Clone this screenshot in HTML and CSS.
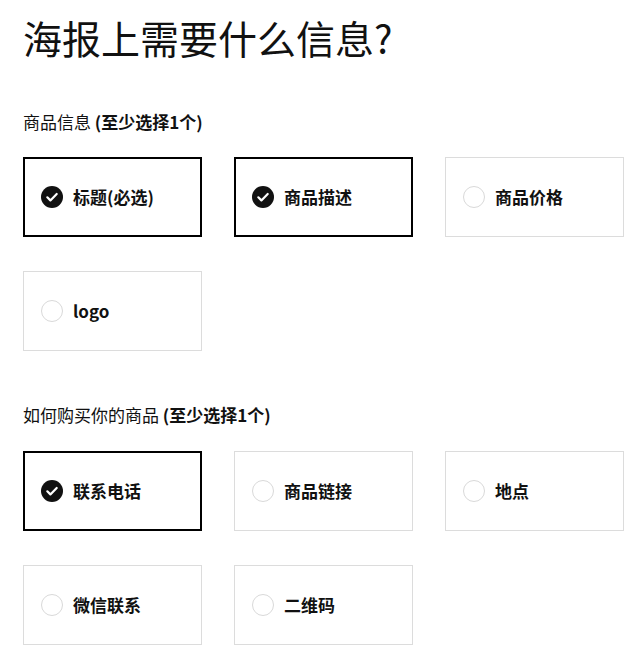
FILE: index.html
```html
<!DOCTYPE html>
<html lang="zh">
<head>
<meta charset="utf-8">
<link rel="stylesheet" href="styles.css">
</head>
<body>
<div class="page">
  <h1 class="title">海报上需要什么信息?</h1>

  <div class="section">
    <div class="label">商品信息 <b>(至少选择1个)</b></div>
    <div class="grid">
      <div class="card selected"><span class="mark"><svg viewBox="0 0 22 22"><circle cx="11" cy="11" r="11" fill="#111"/><path d="M6.3 11.3l3.1 3.1 6.3-6.4" fill="none" stroke="#fff" stroke-width="2.2" stroke-linecap="round" stroke-linejoin="round"/></svg></span><span class="name">标题(必选)</span></div>
      <div class="card selected"><span class="mark"><svg viewBox="0 0 22 22"><circle cx="11" cy="11" r="11" fill="#111"/><path d="M6.3 11.3l3.1 3.1 6.3-6.4" fill="none" stroke="#fff" stroke-width="2.2" stroke-linecap="round" stroke-linejoin="round"/></svg></span><span class="name">商品描述</span></div>
      <div class="card"><span class="mark empty"></span><span class="name">商品价格</span></div>
      <div class="card"><span class="mark empty"></span><span class="name">logo</span></div>
    </div>
  </div>

  <div class="section second">
    <div class="label">如何购买你的商品 <b>(至少选择1个)</b></div>
    <div class="grid">
      <div class="card selected"><span class="mark"><svg viewBox="0 0 22 22"><circle cx="11" cy="11" r="11" fill="#111"/><path d="M6.3 11.3l3.1 3.1 6.3-6.4" fill="none" stroke="#fff" stroke-width="2.2" stroke-linecap="round" stroke-linejoin="round"/></svg></span><span class="name">联系电话</span></div>
      <div class="card"><span class="mark empty"></span><span class="name">商品链接</span></div>
      <div class="card"><span class="mark empty"></span><span class="name">地点</span></div>
      <div class="card"><span class="mark empty"></span><span class="name">微信联系</span></div>
      <div class="card"><span class="mark empty"></span><span class="name">二维码</span></div>
    </div>
  </div>
</div>
</body>
</html>
```
FILE: styles.css
```css
html, body {
  margin: 0;
  padding: 0;
  background: #fff;
}
body {
  font-family: "Noto Sans CJK SC", "Noto Sans", sans-serif;
  color: #111;
}
.page {
  padding: 14px 0 0 23px;
}
.title {
  margin: 0;
  font-size: 39px;
  line-height: 46px;
  font-weight: 400;
  color: #111;
}
.section {
  margin-top: 52px;
}
.section.second {
  margin-top: 54px;
}
.label {
  font-size: 17px;
  line-height: 20px;
  font-weight: 400;
}
.label b {
  font-weight: 700;
}
.grid {
  margin-top: 25px;
  display: grid;
  grid-template-columns: repeat(3, 179px);
  column-gap: 32px;
  row-gap: 34px;
}
.second .grid {
  margin-top: 26px;
}
.card {
  box-sizing: border-box;
  height: 80px;
  border: 1px solid #dcdcdc;
  display: flex;
  align-items: center;
  padding-left: 17px;
  gap: 10px;
}
.card.selected {
  border-color: #000;
  box-shadow: inset 0 0 0 1px #000;
}
.mark {
  width: 22px;
  height: 22px;
  flex: none;
  display: block;
}
.mark svg {
  display: block;
  width: 22px;
  height: 22px;
}
.mark.empty {
  box-sizing: border-box;
  border: 1px solid #d9d9d9;
  border-radius: 50%;
}
.name {
  font-size: 17px;
  font-weight: 700;
  line-height: 24px;
  color: #111;
}
```
